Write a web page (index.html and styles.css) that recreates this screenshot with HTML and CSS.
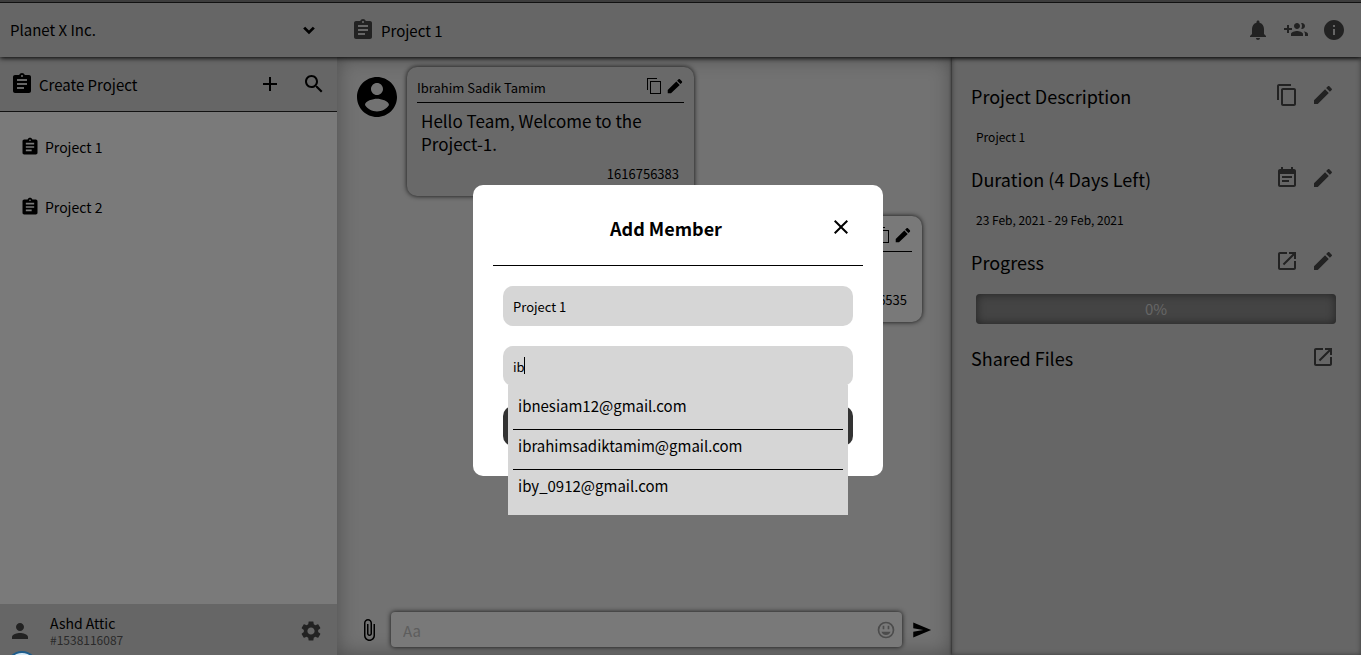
FILE: index.html
```html
<!DOCTYPE html>
<html lang="en">
<head>
<meta charset="utf-8">
<title>Project 1</title>
<link rel="stylesheet" href="styles.css">
</head>
<body>
<svg class="sprite" aria-hidden="true">
  <symbol id="assignment" viewBox="0 0 24 24"><path d="M19 3h-4.180C14.4 1.840 13.3 1 12 1c-1.300 0-2.400.840-2.820 2H5c-1.100 0-2 .9-2 2v14c0 1.100.9 2 2 2h14c1.100 0 2-.9 2-2V5c0-1.100-.9-2-2-2zm-7 0c.55 0 1 .45 1 1s-.45 1-1 1-1-.45-1-1 .45-1 1-1zm2 14H7v-2h7v2zm3-4H7v-2h10v2zm0-4H7V7h10v2z"/></symbol>
  <symbol id="expand" viewBox="0 0 24 24"><path d="M16.590 8L12 12.580 7.410 8 5 10.200l7 7 7-7z"/></symbol>
  <symbol id="add" viewBox="0 0 24 24"><path d="M19 13h-6v6h-2v-6H5v-2h6V5h2v6h6v2z"/></symbol>
  <symbol id="search" viewBox="0 0 24 24"><path d="M15.500 14h-.79l-.28-.27C15.410 12.590 16 11.110 16 9.500 16 5.910 13.090 3 9.500 3S3 5.910 3 9.500 5.910 16 9.500 16c1.610 0 3.090-.59 4.230-1.570l.27.28v.79l5 4.990L20.490 19l-4.990-5zm-6 0C7.010 14 5 11.990 5 9.500S7.010 5 9.500 5 14 7.010 14 9.500 11.990 14 9.500 14z"/></symbol>
  <symbol id="bell" viewBox="0 0 24 24"><path d="M12 22c1.100 0 2-.9 2-2h-4c0 1.100.89 2 2 2zm6-6v-5c0-3.070-1.640-5.640-4.500-6.320V4c0-.83-.67-1.500-1.500-1.500s-1.500.67-1.500 1.500v.68C7.630 5.360 6 7.920 6 11v5l-2 2v1h16v-1l-2-2z"/></symbol>
  <symbol id="group-add" viewBox="0 0 24 24"><path d="M8 10H5V7H3v3H0v2h3v3h2v-3h3v-2zm10 1c1.660 0 2.990-1.340 2.990-3S19.660 5 18 5c-.32 0-.63.05-.91.14.57.81.9 1.790.9 2.860s-.34 2.040-.9 2.860c.28.09.59.14.91.14zm-5 0c1.660 0 2.990-1.340 2.990-3S14.660 5 13 5c-1.660 0-3 1.340-3 3s1.340 3 3 3zm6.620 2.160c.83.73 1.380 1.660 1.380 2.840v2h3v-2c0-1.540-2.370-2.490-4.380-2.840zM13 13c-2 0-6 1-6 3v2h12v-2c0-2-4-3-6-3z"/></symbol>
  <symbol id="info" viewBox="0 0 24 24"><path d="M12 2C6.480 2 2 6.480 2 12s4.480 10 10 10 10-4.480 10-10S17.520 2 12 2zm1 15h-2v-6h2v6zm0-8h-2V7h2v2z"/></symbol>
  <symbol id="copy" viewBox="0 0 24 24"><path d="M16 1H4c-1.100 0-2 .9-2 2v14h2V3h12V1zm3 4H8c-1.100 0-2 .9-2 2v14c0 1.100.9 2 2 2h11c1.100 0 2-.9 2-2V7c0-1.100-.9-2-2-2zm0 16H8V7h11v14z"/></symbol>
  <symbol id="copy-thin" viewBox="0 0 16 16"><path d="M1 0h10v1H2v11H1zM4 3h11v13H4zM5 4v11h9V4z" fill-rule="evenodd"/></symbol>
  <symbol id="edit" viewBox="0 0 24 24"><path d="M3 17.250V21h3.750L17.810 9.940l-3.750-3.750L3 17.250zM20.710 7.040c.39-.39.39-1.020 0-1.410l-2.340-2.340c-.39-.39-1.020-.39-1.410 0l-1.830 1.830 3.750 3.750 1.830-1.830z"/></symbol>
  <symbol id="edit-bold" viewBox="1 1 22 22"><path d="M2 17.500V22h4.500L18.500 10.500l-4.700-4.700zM21.500 7.400c.5-.5.5-1.300 0-1.800l-2.800-2.800c-.5-.5-1.300-.5-1.800 0l-2 2 4.600 4.600z"/></symbol>
  <symbol id="event" viewBox="0 0 24 24"><path d="M17 10H7v2h10v-2zm2-7h-1V1h-2v2H8V1H6v2H5c-1.110 0-1.990.9-1.990 2L3 19c0 1.100.89 2 2 2h14c1.100 0 2-.9 2-2V5c0-1.100-.9-2-2-2zm0 16H5V8h14v11zm-5-5H7v2h7v-2z"/></symbol>
  <symbol id="open" viewBox="0 0 24 24"><path d="M19 19H5V5h7V3H5c-1.110 0-2 .9-2 2v14c0 1.100.89 2 2 2h14c1.100 0 2-.9 2-2v-7h-2v7zM14 3v2h3.590l-9.830 9.830 1.410 1.410L19 6.410V10h2V3h-7z"/></symbol>
  <symbol id="account" viewBox="0 0 24 24"><path d="M12 2C6.480 2 2 6.480 2 12s4.480 10 10 10 10-4.480 10-10S17.520 2 12 2zm0 3c1.660 0 3 1.340 3 3s-1.340 3-3 3-3-1.340-3-3 1.340-3 3-3zm0 14.200c-2.500 0-4.710-1.280-6-3.220.03-1.990 4-3.080 6-3.080 1.990 0 5.970 1.090 6 3.080-1.290 1.940-3.500 3.220-6 3.220z"/></symbol>
  <symbol id="person" viewBox="0 0 24 24"><path d="M12 12c2.210 0 4-1.790 4-4s-1.790-4-4-4-4 1.790-4 4 1.790 4 4 4zm0 2c-2.670 0-8 1.340-8 4v2h16v-2c0-2.660-5.330-4-8-4z"/></symbol>
  <symbol id="settings" viewBox="0 0 24 24"><path d="M19.140 12.940c.04-.3.06-.61.06-.94 0-.32-.02-.64-.07-.94l2.030-1.580c.18-.14.23-.41.12-.61l-1.920-3.320c-.12-.22-.37-.29-.59-.22l-2.390.96c-.5-.38-1.030-.7-1.620-.94l-.36-2.540c-.04-.24-.24-.41-.48-.41h-3.840c-.24 0-.43.17-.47.41l-.36 2.540c-.59.24-1.130.57-1.620.94l-2.390-.96c-.22-.08-.47 0-.59.22L2.740 8.870c-.12.21-.08.47.12.61l2.030 1.580c-.05.3-.09.63-.09.94s.02.64.07.94l-2.030 1.580c-.18.14-.23.41-.12.61l1.920 3.320c.12.22.37.29.59.22l2.390-.96c.5.38 1.030.7 1.620.94l.36 2.540c.05.24.24.41.48.41h3.840c.24 0 .44-.17.47-.41l.36-2.540c.59-.24 1.130-.56 1.620-.94l2.390.96c.22.08.47 0 .59-.22l1.920-3.320c.12-.22.07-.47-.12-.61l-2.010-1.580zM12 15.600c-1.980 0-3.600-1.620-3.600-3.600s1.620-3.600 3.600-3.600 3.600 1.620 3.600 3.600-1.620 3.600-3.600 3.600z"/></symbol>
  <symbol id="attach" viewBox="0 0 24 24"><path d="M16.500 6v11.500c0 2.210-1.790 4-4 4s-4-1.790-4-4V5c0-1.380 1.120-2.500 2.500-2.500s2.500 1.120 2.500 2.500v10.500c0 .55-.45 1-1 1s-1-.45-1-1V6H10v9.500c0 1.380 1.120 2.500 2.500 2.500s2.500-1.120 2.500-2.500V5c0-2.210-1.790-4-4-4S7 2.790 7 5v12.500c0 3.040 2.460 5.500 5.500 5.500s5.500-2.460 5.500-5.500V6h-1.500z"/></symbol>
  <symbol id="smile" viewBox="0 0 24 24"><circle cx="12" cy="12" r="9" fill="none" stroke="currentColor" stroke-width="2"/><path d="M8 7h2v4H8zM14 7h2v4h-2zM6.500 14h11c-.8 2.300-2.900 4-5.500 4s-4.700-1.700-5.500-4z"/></symbol>
  <symbol id="send" viewBox="0 0 24 24"><path d="M1.500 21L23 12 1.500 3v7l12 2-12 2z"/></symbol>
  <symbol id="close" viewBox="0 0 24 24"><path d="M19 6.410L17.590 5 12 10.590 6.410 5 5 6.410 10.590 12 5 17.590 6.410 19 12 13.410 17.590 19 19 17.590 13.410 12z"/></symbol>
</svg>

<div class="app">
  <header class="topbar">
    <div class="company">
      <span>Planet X Inc.</span>
      <button class="icon-btn" aria-label="Switch company"><svg class="icon-20"><use href="#expand"/></svg></button>
    </div>
    <div class="current">
      <svg class="icon-24 muted"><use href="#assignment"/></svg>
      <h1 class="current-name">Project 1</h1>
    </div>
    <div class="top-actions">
      <button class="icon-btn muted" aria-label="Notifications"><svg class="icon-24"><use href="#bell"/></svg></button>
      <button class="icon-btn muted" aria-label="Add member"><svg class="icon-24"><use href="#group-add"/></svg></button>
      <button class="icon-btn muted" aria-label="Project info"><svg class="icon-24"><use href="#info"/></svg></button>
    </div>
  </header>

  <div class="columns">
    <nav class="sidebar">
      <div class="create">
        <svg class="icon-24"><use href="#assignment"/></svg>
        <span class="create-label">Create Project</span>
        <button class="icon-btn" aria-label="Create project"><svg class="icon-24"><use href="#add"/></svg></button>
        <button class="icon-btn" aria-label="Search projects"><svg class="icon-24"><use href="#search"/></svg></button>
      </div>
      <ul class="projects">
        <li><a class="project" href="#p1"><svg class="icon-20"><use href="#assignment"/></svg>Project 1</a></li>
        <li><a class="project" href="#p2"><svg class="icon-20"><use href="#assignment"/></svg>Project 2</a></li>
      </ul>
      <div class="profile">
        <svg class="icon-24 muted"><use href="#person"/></svg>
        <div class="profile-text">
          <div class="profile-name">Ashd Attic</div>
          <div class="profile-id">#1538116087</div>
        </div>
        <button class="icon-btn muted" aria-label="Settings"><svg class="icon-24"><use href="#settings"/></svg></button>
      </div>
    </nav>

    <main class="chat">
      <div class="messages">
        <div class="message">
          <svg class="avatar"><use href="#account"/></svg>
          <article class="bubble">
            <div class="bubble-head">
              <span class="author">Ibrahim Sadik Tamim</span>
              <button class="icon-btn" aria-label="Copy message"><svg class="icon-16"><use href="#copy-thin"/></svg></button>
              <button class="icon-btn" aria-label="Edit message"><svg class="icon-16"><use href="#edit-bold"/></svg></button>
            </div>
            <p class="bubble-text">Hello Team, Welcome to the Project-1.</p>
            <div class="stamp">1616756383</div>
          </article>
        </div>
        <div class="message own">
          <article class="bubble bubble-own">
            <div class="bubble-head">
              <span class="author"></span>
              <button class="icon-btn" aria-label="Copy message"><svg class="icon-16"><use href="#copy-thin"/></svg></button>
              <button class="icon-btn" aria-label="Edit message"><svg class="icon-16"><use href="#edit-bold"/></svg></button>
            </div>
            <p class="bubble-text"></p>
            <div class="stamp">6535</div>
          </article>
        </div>
      </div>
      <form class="composer">
        <button type="button" class="icon-btn" aria-label="Attach file"><svg class="icon-24"><use href="#attach"/></svg></button>
        <div class="compose-box">
          <input class="compose-input" type="text" placeholder="Aa" aria-label="Message">
          <button type="button" class="icon-btn faint" aria-label="Emoji"><svg class="icon-20"><use href="#smile"/></svg></button>
        </div>
        <button type="button" class="icon-btn" aria-label="Send"><svg class="icon-20"><use href="#send"/></svg></button>
      </form>
    </main>

    <aside class="details">
      <section class="section">
        <div class="section-head">
          <h2 class="section-title">Project Description</h2>
          <button class="icon-btn muted" aria-label="Copy description"><svg class="icon-24"><use href="#copy"/></svg></button>
          <button class="icon-btn muted" aria-label="Edit description"><svg class="icon-24"><use href="#edit"/></svg></button>
        </div>
        <p class="section-text">Project 1</p>
      </section>
      <section class="section">
        <div class="section-head">
          <h2 class="section-title">Duration (4 Days Left)</h2>
          <button class="icon-btn muted" aria-label="Calendar"><svg class="icon-24"><use href="#event"/></svg></button>
          <button class="icon-btn muted" aria-label="Edit duration"><svg class="icon-24"><use href="#edit"/></svg></button>
        </div>
        <p class="section-text">23 Feb, 2021 - 29 Feb, 2021</p>
      </section>
      <section class="section">
        <div class="section-head">
          <h2 class="section-title">Progress</h2>
          <button class="icon-btn muted" aria-label="Open progress"><svg class="icon-24"><use href="#open"/></svg></button>
          <button class="icon-btn muted" aria-label="Edit progress"><svg class="icon-24"><use href="#edit"/></svg></button>
        </div>
        <div class="progress" role="progressbar" aria-label="Progress" aria-valuenow="0" aria-valuemin="0" aria-valuemax="100">0%</div>
      </section>
      <section class="section">
        <div class="section-head">
          <h2 class="section-title">Shared Files</h2>
          <button class="icon-btn muted" aria-label="Open shared files"><svg class="icon-24"><use href="#open"/></svg></button>
        </div>
      </section>
    </aside>
  </div>
</div>

<div class="overlay">
  <div class="modal" role="dialog" aria-labelledby="modal-title">
    <div class="modal-head">
      <h2 class="modal-title" id="modal-title">Add Member</h2>
      <button class="icon-btn" aria-label="Close"><svg class="icon-24"><use href="#close"/></svg></button>
    </div>
    <form class="modal-form">
      <input class="field" type="text" value="Project 1" aria-label="Project">
      <div class="combo">
        <input class="field" type="text" value="ib" aria-label="Member email">
        <span class="caret"></span>
        <ul class="suggestions">
          <li class="suggestion">ibnesiam12@gmail.com</li>
          <li class="suggestion">ibrahimsadiktamim@gmail.com</li>
          <li class="suggestion">iby_0912@gmail.com</li>
        </ul>
      </div>
      <button type="button" class="submit" aria-label="Add member"></button>
    </form>
  </div>
</div>
<span class="status-dot"></span>
</body>
</html>
```
FILE: styles.css
```css
* {
  box-sizing: border-box;
}

body {
  margin: 0;
  font-family: "Noto Sans CJK SC", "Noto Sans", sans-serif;
  font-size: 15px;
  line-height: 20px;
  color: #000;
}

h1, h2, p, ul {
  margin: 0;
  padding: 0;
  font-weight: 400;
  list-style: none;
}

button, input {
  font: inherit;
  color: inherit;
}

svg {
  fill: currentColor;
  flex: none;
  display: block;
}

.sprite {
  position: absolute;
  width: 0;
  height: 0;
}

.icon-16 { width: 16px; height: 16px; }
.icon-20 { width: 20px; height: 20px; }
.icon-24 { width: 24px; height: 24px; }

.icon-btn {
  flex: none;
  padding: 0;
  border: 0;
  background: none;
  cursor: pointer;
}

.muted { color: #444; }
.faint { color: #999; }

.app {
  display: flex;
  flex-direction: column;
  height: 100vh;
  overflow: hidden;
  border-top: 2px solid #7a7a7a;
}

.topbar {
  display: grid;
  grid-template-columns: 337px 1fr auto;
  align-items: center;
  height: 55px;
  flex: none;
  border-top: 1px solid #222;
  background: #ccc;
  box-shadow: 0 1px 5px #000;
  z-index: 1;
}

.company {
  display: flex;
  align-items: center;
  justify-content: space-between;
  padding: 0 18px 1px 10px;
}

.current {
  display: flex;
  align-items: center;
  gap: 6px;
  padding-left: 14px;
}

.current-name {
  font-size: 15px;
  padding-top: 2px;
}

.top-actions {
  display: flex;
  gap: 14px;
  padding-right: 15px;
}

.columns {
  display: grid;
  grid-template-columns: 337px 1fr 409px;
  flex: 1;
  min-height: 0;
}

.sidebar {
  display: flex;
  flex-direction: column;
  background: #f5f5f5;
}

.create {
  display: flex;
  align-items: center;
  gap: 20px;
  height: 55px;
  padding: 0 11px 0 10px;
  border-bottom: 1px solid #222;
  background: #ccc;
}

.create-label {
  flex: 1;
  margin-left: -15px;
  padding-top: 2px;
}

.projects {
  flex: 1;
  padding: 5px 20px;
}

.project {
  display: flex;
  align-items: center;
  gap: 5px;
  height: 60px;
  font-size: 14px;
  color: inherit;
  text-decoration: none;
}

.profile {
  display: flex;
  align-items: center;
  gap: 18px;
  height: 51px;
  padding: 2px 14px 0 8px;
  background: #ccc;
}

.profile-text {
  flex: 1;
}

.profile-name {
  font-size: 14px;
  line-height: 18px;
}

.profile-id {
  font-size: 12px;
  line-height: 15px;
  color: #555;
}

.chat {
  display: flex;
  flex-direction: column;
  background: #e4e4e4;
  box-shadow: inset 0 0 20px #999;
}

.messages {
  flex: 1;
  display: flex;
  flex-direction: column;
  gap: 20px;
  padding: 10px 30px 0 16px;
}

.message {
  display: flex;
  align-items: flex-start;
  gap: 6px;
}

.own {
  justify-content: flex-end;
}

.avatar {
  width: 48px;
  height: 48px;
  margin-top: 6px;
}

.bubble {
  width: 287px;
  padding: 10px;
  border-radius: 10px;
  background: #d2d2d2;
  box-shadow: 0 0 5px #222;
}

.bubble-own {
  background: #f2f2f2;
}

.bubble-head {
  display: flex;
  align-items: center;
  gap: 5px;
  height: 26px;
  padding: 0 1px 8px 0;
  border-bottom: 1px solid #000;
}

.author {
  flex: 1;
  font-size: 13px;
  padding-top: 5px;
}

.bubble-text {
  min-height: 29px;
  padding: 6px 4px 0;
  font-size: 17px;
  line-height: 23px;
}

.stamp {
  padding: 9px 5px 2px;
  font-size: 13px;
  text-align: right;
}

.composer {
  display: flex;
  align-items: center;
  gap: 10px;
  padding: 0 20px 8px;
}

.compose-box {
  flex: 1;
  display: flex;
  align-items: center;
  height: 35px;
  padding: 0 6px 0 12px;
  border-radius: 4px;
  background: #f2f2f2;
  box-shadow: 0 0 5px #222;
}

.compose-input {
  flex: 1;
  min-width: 0;
  padding: 2px 0 0;
  border: 0;
  background: none;
}

.compose-input::placeholder {
  color: #bbb;
}

.details {
  padding: 19px 25px 0 19px;
  background: #ccc;
  box-shadow: inset 0 0 5px #777, 0 0 3px #111;
}

.section {
  padding-bottom: 3px;
}

.section-head {
  display: flex;
  align-items: center;
  gap: 12px;
  height: 40px;
  padding: 0 1px 2px 0;
}

.section-title {
  flex: 1;
  padding-top: 2px;
  font-size: 18px;
  line-height: 24px;
}

.section-text {
  padding: 2px 0 0 5px;
  font-size: 12px;
  line-height: 38px;
}

.progress {
  height: 30px;
  margin: 12px 0 11px 5px;
  border-radius: 4px;
  background: #888;
  box-shadow: inset 0 0 10px #444;
  color: #ccc;
  line-height: 30px;
  text-align: center;
}

.overlay {
  position: fixed;
  inset: 0;
  z-index: 2;
  display: flex;
  align-items: center;
  justify-content: center;
  padding: 6px 5px 0 0;
  background: rgba(0, 0, 0, 0.5);
}

.modal {
  width: 410px;
  padding: 20px 20px 30px;
  border-radius: 10px;
  background: #fff;
}

.modal-head {
  display: flex;
  align-items: center;
  height: 61px;
  padding: 0 10px 16px;
  border-bottom: 1px solid #000;
}

.modal-title {
  flex: 1;
  padding-top: 2px;
  font-size: 18px;
  line-height: 24px;
  font-weight: 700;
  text-align: center;
}

.modal-form {
  display: flex;
  flex-direction: column;
  gap: 20px;
  padding: 20px 10px 0;
}

.field {
  display: block;
  width: 100%;
  height: 40px;
  padding: 1px 10px;
  border: 0;
  border-radius: 10px;
  outline: 0;
  background: #d6d6d6;
  font-size: 13px;
}

.combo {
  position: relative;
}

.caret {
  position: absolute;
  top: 11px;
  left: 21px;
  width: 1px;
  height: 17px;
  background: #000;
}

.suggestions {
  position: absolute;
  top: 39px;
  left: 5px;
  right: 5px;
  padding: 5px;
  background: #d6d6d6;
}

.suggestion {
  height: 40px;
  padding: 0 5px;
  border-bottom: 1px solid #000;
  line-height: 32px;
}

.suggestion:last-child {
  border-bottom: 0;
}

.submit {
  height: 40px;
  border: 0;
  border-radius: 10px;
  background: #333;
}

.status-dot {
  position: fixed;
  left: 6px;
  bottom: -28px;
  z-index: 3;
  width: 32px;
  height: 32px;
  border: 2px solid #1d5c8c;
  border-radius: 50%;
  background: #d5e8f5;
}
```
